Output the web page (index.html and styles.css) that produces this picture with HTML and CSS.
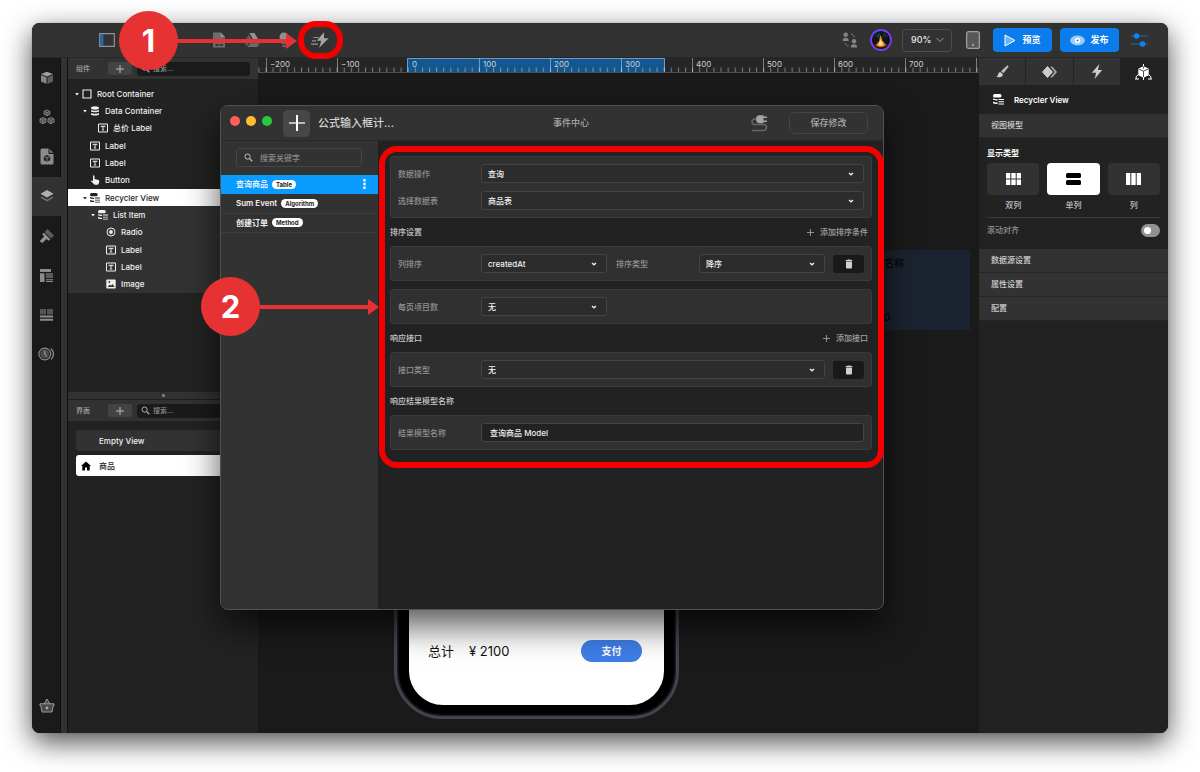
FILE: index.html
```html
<!DOCTYPE html>
<html lang="zh-CN">
<head>
<meta charset="utf-8">
<title>事件中心</title>
<link rel="stylesheet" href="styles.css">
</head>
<body>
<svg class="defs" aria-hidden="true">
  <symbol id="i-label" viewBox="0 0 10 10"><path d="M.5 1h9v8h-9z" fill="none" stroke="currentColor"/><path d="M2.700 2.800h4.600v1.500H6.600V3.700H5.500v3h.7v.8H3.800v-.8h.7v-3H3.400v.6H2.700z" fill="currentColor"/></symbol>
  <symbol id="i-data" viewBox="0 0 10 10"><g fill="currentColor"><ellipse cx="5" cy="2" rx="4" ry="1.700"/><path d="M1 4c1.600 1.100 6.400 1.100 8 0v1.500C7.800 6.600 2.200 6.600 1 5.500zM1 7c1.600 1.100 6.400 1.100 8 0v1.500C7.800 9.800 2.200 9.800 1 8.500z"/></g></symbol>
  <symbol id="i-recycler" viewBox="0 0 11 11"><g fill="currentColor"><rect x="0" y="0" width="8.500" height="3.600" rx="1.700"/><path d="M0 4.200c1 .9 2.500 1 4.500 1v1.500C2.500 6.700.6 6.500 0 5.600zM0 7.500c1 .9 2.500 1 4.500 1V10C2.500 10 .6 9.800 0 9z"/><path d="M5.500 5h5.500v1H5.500zM5.500 7.300h5.500v1H5.500zM5.500 9.500h5.500v1H5.500z"/></g></symbol>
  <symbol id="i-search" viewBox="0 0 10 10"><circle cx="4" cy="4" r="2.900" fill="none" stroke="currentColor" stroke-width="1.100"/><path d="M6.200 6.200 9.200 9.200" stroke="currentColor" stroke-width="1.300"/></symbol>
  <symbol id="i-plus" viewBox="0 0 8 8"><path d="M4 0v8M0 4h8" stroke="currentColor" fill="none"/></symbol>
  <symbol id="i-caret" viewBox="0 0 6 6"><path d="M1.200 2h3.600L3 4.400z" fill="currentColor"/></symbol>
  <symbol id="i-chev" viewBox="0 0 6 6"><path d="M1 2 3 3.800 5 2" fill="none" stroke="currentColor" stroke-width="1.300"/></symbol>
  <symbol id="i-trash" viewBox="0 0 8 10"><path d="M2.500.5h3V1H7.300v1.200H.7V1h1.800zM1 2.800h6V8.500Q7 9.500 6 9.500H2Q1 9.500 1 8.500z" fill="currentColor"/></symbol>
  <symbol id="i-bolt" viewBox="0 0 12 16"><path d="M8.500 0 .5 9.200H5L3.500 16 11.500 6.300H7z" fill="currentColor"/></symbol>
</svg>

<main class="window">
  <header class="topbar">
    <button class="icon-btn toggle-panel" aria-label="面板"><svg width="16" height="14" viewBox="0 0 16 14"><path d="M.7.700h14.600v12.600H.7z" fill="none" stroke="#929292" stroke-width="1.200"/><path d="M1.300 1.300h3.200v11.400H1.300z" fill="#2469ae"/></svg></button>
    <nav class="tools" aria-label="工具">
      <button class="icon-btn" aria-label="文件"><svg width="16" height="16" viewBox="0 0 16 16"><path d="M2 .5h7.500L14 5v10.500H2z" fill="#6c6c6c"/><path d="M9.500.5 14 5H9.500z" fill="#929292"/><path d="M4.500 8h3v2.500h-3zM8.700 8h3v2.500h-3zM4.500 12h3v2h-3zM8.700 12h3v2h-3z" fill="#323232"/></svg></button>
      <button class="icon-btn" aria-label="云盘"><svg width="16" height="14" viewBox="0 0 16 14"><path d="M5.500 0h5L16 9.500h-5.200z" fill="#929292"/><path d="M4.800 1.200 7.500 5.700 2.800 13.500.2 9z" fill="#5c5c5c"/><path d="M6 10.200h9.700L13.200 14H3.500z" fill="#6c6c6c"/></svg></button>
      <button class="icon-btn" aria-label="提示"><svg width="16" height="16" viewBox="0 0 16 16"><circle cx="7" cy="5" r="4.500" fill="#8f8f8f"/><path d="M4.500 10h5v2h-5zM5.500 13h3v2h-3z" fill="#6c6c6c"/></svg></button>
      <button class="icon-btn" aria-label="事件中心"><svg width="20" height="16" viewBox="0 0 20 16"><path d="M14 .3 6.800 8.700h4.500L9.200 15.700 18.700 6.300H14z" fill="#a5a5a5"/><path d="M3.500 5.500h5M2 8.800h4M1 12.200h7" stroke="#929292" stroke-width="1.200"/></svg></button>
    </nav>
    <div class="actions">
      <button class="icon-btn" aria-label="协作"><svg width="16" height="16" viewBox="0 0 16 16" fill="#858585"><circle cx="3.700" cy="2.800" r="2.200"/><path d="M.8 9V7.500Q1 5.800 3.700 5.800T6.600 7.500V9z"/><circle cx="12" cy="9.300" r="2.200"/><path d="M9 15.500V14q.2-1.700 3-1.700t3 1.700v1.500z"/><path d="M9 2q3 .3 3.200 3.300M3.500 11q.3 2.800 3 3" fill="none" stroke="#858585" stroke-dasharray="2 1"/></svg></button>
      <svg class="avatar" width="22" height="22" viewBox="0 0 22 22" role="img" aria-label="头像"><circle cx="11" cy="11" r="10" fill="#0c161c" stroke="#7a3df0" stroke-width="1.800"/><path d="M5 8l1.500-3L8 9l1-5 1.500 5M13 8l1.500-4L16 8l1-2" stroke="#1f3c44" fill="none"/><path d="M4 16q7-4 14 0-7 5-14 0z" fill="#7a3010"/><path d="M6.500 16.500q0-2.500 2.500-4 .5-3 1.500-6.500 1.500 3.500 2 6 3 2 2.500 4.500-4 2.500-8.500 0z" fill="#f08a1c"/><path d="M8.500 16.500q.5-3 2-6 2.500 3 2.200 6z" fill="#ffe27a"/></svg>
      <span class="zoom"><select aria-label="缩放"><option>90%</option></select><svg width="8" height="6" viewBox="0 0 8 6"><path d="M.6 1 4 4.500 7.400 1" fill="none" stroke="#9a9a9a"/></svg></span>
      <button class="icon-btn device" aria-label="设备"><svg width="14" height="18" viewBox="0 0 14 18"><rect x=".6" y=".6" width="12.800" height="16.800" rx="2" fill="#585858" stroke="#a0a0a0" stroke-width="1.200"/><circle cx="7" cy="14" r="1" fill="#b5b5b5"/></svg></button>
      <button class="primary"><svg width="12" height="13" viewBox="0 0 12 13"><path d="M1 1 11 6.500 1 12z" fill="#6cb2f7" stroke="#fff" stroke-linejoin="round"/></svg>预览</button>
      <button class="primary publish"><svg width="15" height="11" viewBox="0 0 15 11"><ellipse cx="7.500" cy="5.500" rx="7.300" ry="5" fill="#9ecbfa"/><circle cx="7.500" cy="5.500" r="2.700" fill="#fff"/><circle cx="7.500" cy="5.500" r="1" fill="#0a7ceb"/></svg>发布</button>
      <button class="icon-btn settings" aria-label="设置"><svg width="18" height="14" viewBox="0 0 18 14"><path d="M0 3h17M0 11h17" stroke="#1c68b4"/><circle cx="5.500" cy="3" r="2.800" fill="#0a84ff"/><circle cx="11.500" cy="11" r="2.800" fill="#0a84ff"/></svg></button>
    </div>
  </header>

  <div class="workspace">
    <nav class="rail" aria-label="侧栏">
      <div class="rail-list">
        <button aria-label="组件"><svg width="14" height="14" viewBox="0 0 14 14"><path d="M7 .8 13 3 7 5.400 1 3z" fill="#a0a0a0"/><path d="M1 4l5.500 2.200V13L1 10.600z" fill="#858585"/><path d="M13 4 7.500 6.200V13l5.500-2.400z" fill="#5e5e5e"/></svg></button>
        <button aria-label="模块"><svg width="16" height="16" viewBox="0 0 16 16" fill="#4c4c4c" stroke="#8a8a8a" stroke-width=".8"><path d="M8 1l3 1.300v3L8 6.700 5 5.300v-3zM5 2.300l3 1.300 3-1.300M8 3.600v3M4 8.500l3 1.300v3.500L4 14.700 1 13.300V9.800zM1 9.800 4 11l3-1.200M4 11v3.700M12 8.500l3 1.300v3.500l-3 1.400-3-1.400V9.800zM9 9.800l3 1.200 3-1.200M12 11v3.700"/></svg></button>
        <button aria-label="文件"><svg width="14" height="17" viewBox="0 0 14 17"><path d="M2 .5h6.500V5q0 1 1 1H13.500v9q0 1.500-1.500 1.500H2Q.5 16.500.5 15V2Q.5.500 2 .500z" fill="#8b8b8b"/><path d="M9.500.8 13.300 4.800H9.500z" fill="#777"/><path d="M7 7l3.200 1.300v4L7 13.800l-3.200-1.500v-4z" fill="#222"/><path d="M3.800 8.300 7 9.700l3.200-1.400M7 9.700v4" stroke="#8b8b8b" fill="none" stroke-width=".8"/></svg></button>
        <button class="active" aria-label="图层"><svg width="14" height="14" viewBox="0 0 14 14"><path d="M7 1l6.500 3.800L7 8.600.5 4.800z" fill="#b0b0b0"/><path d="M2 7.800l5 2.900 5-2.900 1.500.9L7 12.500.5 8.700z" fill="#707070"/></svg></button>
        <button aria-label="样式"><svg width="14" height="14" viewBox="0 0 14 14"><path d="M7.500 0 14 6.500 11 9.500 4.500 3z" fill="#5b5b5b"/><path d="M3.800 3.700l6.500 6.500-1.500 1.500-2.300-1.600L2.700 13.700Q1.500 14 .5 13T.5 11.200L4.200 7.500 2.300 5.200z" fill="#929292"/></svg></button>
        <button aria-label="布局"><svg width="13" height="13" viewBox="0 0 13 13"><path d="M0 0h11v3H0zM0 4.200h4.500V13H0zM6 10.300h7v1H6zM6 12h7v1H6z" fill="#8b8b8b"/><path d="M6 4h7v5H6z" fill="#5b5b5b"/></svg></button>
        <button aria-label="网格"><svg width="13" height="12" viewBox="0 0 13 12"><path d="M0 0h6v5.500H0zM7 0h6v5.500H7z" fill="#555"/><path d="M0 6.500h13v2H0zM0 9.800h13v2H0z" fill="#8b8b8b"/></svg></button>
        <button aria-label="历史"><svg width="17" height="14" viewBox="0 0 17 14" fill="none" stroke="#8b8b8b"><circle cx="6.800" cy="7" r="5.900" stroke-width="1.200"/><circle cx="6.800" cy="7" r="4.600" fill="#4a4a4a" stroke="none"/><path d="M6.800 3.500V7.300L8.500 9.500" stroke="#aaa"/><path d="M13 1.500q5 5.500 0 11" stroke-width="1.300"/></svg></button>
      </div>
      <button class="rail-end" aria-label="商店"><svg width="16" height="15" viewBox="0 0 16 15"><path d="M5 6 8 1l3 5M1 5.800h14v2h-.8L13 14H3L1.800 7.800H1z" fill="#4a4a4a" stroke="#999"/><circle cx="8" cy="10" r="1.400" fill="#aaa"/></svg></button>
    </nav>

    <aside class="side">
      <section class="components">
        <div class="side-head">
          <h2>组件</h2>
          <button class="add" aria-label="添加组件"><svg width="8" height="8"><use href="#i-plus"/></svg></button>
          <label class="search"><svg width="9" height="9"><use href="#i-search"/></svg><input type="search" placeholder="搜索..." aria-label="搜索组件"></label>
        </div>
        <ul class="tree">
          <li class="d0"><svg class="caret"><use href="#i-caret"/></svg><svg class="ico" viewBox="0 0 10 10"><path d="M1 1h8v8H1z" fill="none" stroke="currentColor" stroke-width="1.100"/></svg>Root Container</li>
          <li class="d1"><svg class="caret"><use href="#i-caret"/></svg><svg class="ico"><use href="#i-data"/></svg>Data Container</li>
          <li class="d2"><span class="caret"></span><svg class="ico"><use href="#i-label"/></svg>总价 Label</li>
          <li class="d1"><span class="caret"></span><svg class="ico"><use href="#i-label"/></svg>Label</li>
          <li class="d1"><span class="caret"></span><svg class="ico"><use href="#i-label"/></svg>Label</li>
          <li class="d1"><span class="caret"></span><svg class="ico" viewBox="0 0 10 10"><path d="M3 1q0-.8.7-.8t.8.800v3l4 .9q1 .3.8 1.300L8.800 8.500 7.800 9.800H4.500L.8 5.900q.8-1 2.200.4z" fill="currentColor"/></svg>Button</li>
          <li class="d1 selected"><svg class="caret"><use href="#i-caret"/></svg><svg class="ico"><use href="#i-recycler"/></svg>Recycler View</li>
          <li class="d2 child"><svg class="caret"><use href="#i-caret"/></svg><svg class="ico"><use href="#i-recycler"/></svg>List Item</li>
          <li class="d3 child"><span class="caret"></span><svg class="ico" viewBox="0 0 10 10"><circle cx="5" cy="5" r="4" fill="none" stroke="currentColor"/><circle cx="5" cy="5" r="1.900" fill="currentColor"/></svg>Radio</li>
          <li class="d3 child"><span class="caret"></span><svg class="ico"><use href="#i-label"/></svg>Label</li>
          <li class="d3 child"><span class="caret"></span><svg class="ico"><use href="#i-label"/></svg>Label</li>
          <li class="d3 child"><span class="caret"></span><svg class="ico" viewBox="0 0 10 10"><rect x=".3" y=".5" width="9.400" height="9" rx="1" fill="currentColor"/><path d="M1.500 8 4 5.500l1.200 1.200L6.500 5 8.600 8z" fill="#323232"/><circle cx="3.300" cy="3" r=".9" fill="#323232"/></svg>Image</li>
        </ul>
      </section>
      <div class="splitter"></div>
      <section>
        <div class="side-head">
          <h2>界面</h2>
          <button class="add" aria-label="添加界面"><svg width="8" height="8"><use href="#i-plus"/></svg></button>
          <label class="search"><svg width="9" height="9"><use href="#i-search"/></svg><input type="search" placeholder="搜索..." aria-label="搜索界面"></label>
        </div>
        <ul class="views">
          <li><span class="ico"></span>Empty View</li>
          <li class="current"><svg class="ico" viewBox="0 0 10 10"><path d="M5 .5 10 5H8.700v4.500H6V6.500H4v3H1.300V5H0z" fill="#000"/></svg>商品</li>
        </ul>
      </section>
    </aside>

    <section class="canvas" aria-label="画布">
      <svg class="ruler" height="15">
        <defs><pattern id="ticks" x="7.500" y="0" width="7.110" height="15" patternUnits="userSpaceOnUse"><path d="M.5 9.500V14" stroke="#fff" stroke-opacity=".4"/></pattern></defs>
        <rect x="149" y="0" width="258" height="14" fill="#14568f"/>
        <path d="M149.500 15V.5H406.500V14" fill="none" stroke="#6d9bc6"/>
        <rect width="100%" height="14" fill="url(#ticks)"/>
        <path d="M8.500 0v14M79.500 0v14M221.500 0v14M292.500 0v14M363.500 0v14M434.500 0v14M505.500 0v14M576.500 0v14M647.500 0v14M718.500 0v14" stroke="#fff" stroke-opacity=".4"/>
        <path d="M0 14.500H4000" stroke="#505050"/>
        <g class="ruler-text"><text x="12" y="9">−200</text><text x="83" y="9">−100</text><text x="154" y="9">0</text><text x="225" y="9">100</text><text x="296" y="9">200</text><text x="367" y="9">300</text><text x="438" y="9">400</text><text x="509" y="9">500</text><text x="580" y="9">600</text><text x="651" y="9">700</text></g>
      </svg>
      <div class="cell"><span>名称</span><span>0</span></div>
      <div class="phone">
        <div class="screen">
          <span>总计</span><span class="price">¥ 2100</span><button class="pay">支付</button>
        </div>
      </div>
    </section>

    <aside class="inspector">
      <nav class="tabs" aria-label="检查器">
        <button aria-label="样式"><svg width="13" height="13" viewBox="0 0 13 13"><path d="M11.300.300 12.700 1.600 7.500 8.300 5 6.300z" fill="#bbb"/><path d="M4.300 7l2.600 2.200Q6.500 12 3.500 12.300L.3 12Q2 11.300 2 9.500 2.500 7.300 4.300 7z" fill="#d0d0d0"/></svg></button>
        <button aria-label="状态"><svg width="15" height="12" viewBox="0 0 15 12"><path d="M5.500.500 10.500 6 5.500 11.500.5 6z" fill="#ccc" stroke="#ccc" stroke-linejoin="round"/><path d="M8.300.500h1.800L15 6l-4.900 5.500H8.300L12.600 6z" fill="#aaa"/></svg></button>
        <button class="bolt" aria-label="事件"><svg width="12" height="15"><use href="#i-bolt"/></svg></button>
        <button class="active" aria-label="数据"><svg width="17" height="16" viewBox="0 0 17 16"><path d="M8 0h1v2.600l4.700 2v6.600L8.500 13.700 3.300 11.200V4.600L8 2.600z" fill="#fff"/><path d="M3.500 4.900l5 2.200 5-2.200M8.500 7.100v6.500M8.500 2.500v2.200" stroke="#222" fill="none" stroke-width=".8"/><path d="M3.500 10.500 1.200 12.500V15M13.500 10.500l2.300 2V15M0 15h4M13 15H17M8.500 13v3" stroke="#fff" fill="none"/></svg></button>
      </nav>
      <h1 class="obj"><svg width="11" height="11"><use href="#i-recycler"/></svg>Recycler View</h1>
      <h2 class="bar">视图模型</h2>
      <div class="model">
        <h3>显示类型</h3>
        <div class="cards">
          <div><button aria-label="双列"><svg width="15" height="12" viewBox="0 0 15 12" fill="#fff"><path d="M0 0h4.300v5.400H0zM5.300 0h4.400v5.400H5.300zM10.700 0H15v5.400h-4.300zM0 6.500h4.300V12H0zM5.300 6.500h4.400V12H5.300zM10.700 6.500H15V12h-4.300z"/></svg></button><span>双列</span></div>
          <div><button class="on" aria-label="单列"><svg width="15" height="12" viewBox="0 0 15 12"><rect width="15" height="5" rx="1.500"/><rect y="7" width="15" height="5" rx="1.500"/></svg></button><span>单列</span></div>
          <div><button aria-label="列"><svg width="15" height="12" viewBox="0 0 15 12" fill="#fff"><path d="M0 0h4.300v12H0zM5.300 0h4.400v12H5.300zM10.700 0H15v12h-4.300z"/></svg></button><span>列</span></div>
        </div>
        <label class="snap">滚动对齐<input type="checkbox" role="switch"></label>
      </div>
      <h2 class="bar">数据源设置</h2>
      <h2 class="bar">属性设置</h2>
      <h2 class="bar">配置</h2>
    </aside>
  </div>

  <section class="dialog" role="dialog" aria-label="事件中心">
    <header class="dialog-head">
      <span class="lights"><i></i><i></i><i></i></span>
      <button class="new" aria-label="新建"><svg width="16" height="16" viewBox="0 0 16 16"><path d="M0 8h16" stroke="#bbb" stroke-width="2"/><path d="M8 0v16" stroke="#fff" stroke-width="2"/></svg></button>
      <span class="doc">公式输入框计...</span>
      <h2>事件中心</h2>
      <div class="dialog-tools">
        <svg width="17" height="17" viewBox="0 0 17 17"><path d="M5.500 4H4Q1 4 1 6.800T4 9.500H13Q15.500 9.500 15.500 12.200T13 15.500H1" fill="none" stroke="#666" stroke-width="1.600"/><path d="M8 .3h4.500v1.200H16V3h-3.500v2.500H16V7h-3.500v1.200H8Q5 7.800 5 4.300T8 .3z" fill="#a5a5a5"/></svg>
        <button class="save">保存修改</button>
      </div>
    </header>
    <div class="dialog-body">
      <nav class="events">
        <label class="find"><svg width="9" height="9"><use href="#i-search"/></svg><input type="search" placeholder="搜索关键字" aria-label="搜索关键字"></label>
        <ul>
          <li class="on">查询商品<b>Table</b><button aria-label="更多"><svg width="3" height="10" viewBox="0 0 3 10" fill="#fff"><path d="M.3 0h2.400v2.400H.3zM.3 3.800h2.400v2.400H.3zM.3 7.600h2.400V10H.3z"/></svg></button></li>
          <li>Sum Event<b>Algorithm</b></li>
          <li>创建订单<b>Method</b></li>
        </ul>
      </nav>
      <form class="form">
        <div class="group">
          <div class="row"><label for="op">数据操作</label><span class="pick wide"><select id="op"><option>查询</option></select><svg><use href="#i-chev"/></svg></span></div>
          <div class="row"><label for="tb">选择数据表</label><span class="pick wide"><select id="tb"><option>商品表</option></select><svg><use href="#i-chev"/></svg></span></div>
        </div>
        <div class="caption"><h3>排序设置</h3><button type="button"><svg width="7" height="7"><use href="#i-plus"/></svg>添加排序条件</button></div>
        <div class="group">
          <div class="row"><label for="col">列排序</label><span class="pick"><select id="col"><option>createdAt</option></select><svg><use href="#i-chev"/></svg></span><label class="second" for="ord">排序类型</label><span class="pick"><select id="ord"><option>降序</option></select><svg><use href="#i-chev"/></svg></span><button type="button" class="del" aria-label="删除排序"><svg width="8" height="10"><use href="#i-trash"/></svg></button></div>
        </div>
        <div class="group next">
          <div class="row"><label for="pg">每页项目数</label><span class="pick"><select id="pg"><option>无</option></select><svg><use href="#i-chev"/></svg></span></div>
        </div>
        <div class="caption"><h3>响应接口</h3><button type="button"><svg width="7" height="7"><use href="#i-plus"/></svg>添加接口</button></div>
        <div class="group">
          <div class="row"><label for="api">接口类型</label><span class="pick wide"><select id="api"><option>无</option></select><svg><use href="#i-chev"/></svg></span><button type="button" class="del" aria-label="删除接口"><svg width="8" height="10"><use href="#i-trash"/></svg></button></div>
        </div>
        <div class="caption"><h3>响应结果模型名称</h3></div>
        <div class="group">
          <div class="row"><label for="nm">结果模型名称</label><input id="nm" type="text" value="查询商品 Model"></div>
        </div>
      </form>
    </div>
  </section>

  <div class="ring ring-tool"></div>
  <div class="ring ring-form"></div>
  <div class="step step-one"><span>1</span><svg width="119" height="16" viewBox="0 0 119 16"><path d="M0 6h108V0l11 8-11 8v-6H0z" fill="#e63232"/></svg></div>
  <div class="step step-two"><span>2</span><svg width="119" height="16" viewBox="0 0 119 16"><path d="M0 6h108V0l11 8-11 8v-6H0z" fill="#e63232"/></svg></div>
</main>
</body>
</html>
```

FILE: styles.css
```css
* { box-sizing: border-box; }
body {
  margin: 0;
  padding: 23px 32px 39px;
  background: #fff;
  color: #e6e6e6;
  font: 500 8px/12px Inter, "Noto Sans CJK SC", sans-serif;
}
h1, h2, h3, ul { margin: 0; padding: 0; font-size: inherit; font-weight: inherit; list-style: none; }
button, input, select { margin: 0; padding: 0; border: 0; background: none; color: inherit; font: inherit; }
svg { display: block; flex: none; }
input::placeholder { color: #8a8a8a; opacity: 1; }
input[type="search"] { appearance: none; outline: 0; width: 100%; min-width: 0; }
.defs { position: absolute; width: 0; height: 0; }

.window {
  position: relative;
  display: flex;
  flex-direction: column;
  min-height: calc(100vh - 62px);
  border-radius: 8px;
  background: #222;
  box-shadow: 0 0 1px #555, 0 9px 28px rgba(0, 0, 0, .7);
}

/* Top bar */
.topbar { display: flex; align-items: center; height: 35px; padding: 0 19px 0 67px; background: #323232; border-radius: 8px 8px 0 0; border-bottom: 1px solid #262626; }
.icon-btn { display: grid; place-items: center; }
.tools { display: flex; align-items: center; gap: 17px; margin-left: 96px; }
.actions { display: flex; align-items: center; gap: 12px; margin-left: auto; }
.zoom { display: grid; align-items: center; width: 50px; height: 23px; border: 1px solid #4d4d4d; border-radius: 4px; margin-left: -2px; }
.zoom > * { grid-area: 1 / 1; }
.zoom select { appearance: none; height: 21px; padding-left: 8px; font-size: 9px; }
.zoom svg { justify-self: end; margin-right: 7px; pointer-events: none; }
.device { margin: 0 1px 0 2px; }
.primary { display: flex; align-items: center; justify-content: center; gap: 6px; width: 59px; height: 24px; border-radius: 4px; background: #0a7ceb; color: #fff; font-size: 9px; font-weight: 700; }
.publish { margin-left: -4px; gap: 5px; }

/* Workspace */
.workspace { flex: 1; display: flex; border-radius: 0 0 8px 8px; overflow: hidden; }
.rail { display: flex; flex-direction: column; justify-content: space-between; width: 35px; border-right: 6px solid #323232; background: #1a1a1a; box-shadow: inset -1px 0 #111; }
.rail-list { display: grid; grid-auto-rows: 1fr; height: 316px; }
.rail button { display: grid; place-items: center; }
.rail .active { background: #323232; }
.rail .rail-end { height: 56px; }

.side { width: 191px; background: #222; border-left: 1px solid #111; }
.components { height: 334px; }
.side-head { display: flex; align-items: center; height: 21px; padding: 0 8px 0 8px; background: #323232; color: #a0a0a0; }
.side-head h2 { width: 32px; font-size: 7px; }
.add { display: grid; place-items: center; width: 24px; height: 13px; border-radius: 3px; background: #434343; color: #bbb; }
.search { flex: 1; display: flex; align-items: center; gap: 3px; height: 14px; margin-left: 5px; padding: 0 4px; border-radius: 3px; background: #1a1a1a; color: #b0b0b0; }
.search input { font-size: 7px; }
.tree { display: grid; grid-auto-rows: 1fr; height: 208px; margin-top: 6px; color: #f0f0f0; }
.tree li { display: flex; align-items: center; }
.tree .caret { width: 6px; height: 6px; margin-right: 2px; }
.tree .ico { width: 10px; height: 10px; margin-right: 5px; }
.d0 { padding-left: 6px; }
.d1 { padding-left: 14px; }
.d2 { padding-left: 22px; }
.d3 { padding-left: 30px; }
.tree .selected { background: #fff; color: #222; }
.child { background: #323232; }
.splitter { display: grid; place-items: center; height: 8px; background: #323232; border-bottom: 1px solid #1e1e1e; }
.splitter::after { content: ""; width: 3px; height: 3px; border-radius: 50%; background: #888; }
.views { display: grid; gap: 4px; padding: 9px 8px; }
.views li { display: flex; align-items: center; gap: 8px; height: 21px; padding-left: 5px; border-radius: 3px; background: #323232; color: #f0f0f0; }
.views .ico { width: 10px; height: 10px; }
.views .current { background: #fff; color: #222; }

/* Canvas */
.canvas { position: relative; flex: 1; min-width: 0; overflow: hidden; background: #1a1a1a; }
.ruler { width: 100%; background: #262626; }
.ruler-text { fill: #d0d0d0; font-size: 8px; font-weight: 400; }
.cell { position: absolute; top: 192px; right: 9px; display: flex; flex-direction: column; justify-content: space-between; width: 88px; height: 80px; padding: 7px 2px; background: #1b2330; color: #050608; font-size: 10px; }
.phone { position: absolute; left: 136px; top: 120px; width: 285px; height: 541px; padding: 11px 12px; border: 3px solid #45424f; border-radius: 48px; background: #000; box-shadow: inset 0 0 2px 1px #2a2835; }
.screen { display: flex; align-items: center; height: 100%; padding: 404px 22px 0 19px; border-radius: 34px; background: #fff; color: #111; font-size: 13px; font-weight: 400; }
.price { margin-left: 15px; }
.pay { width: 61px; height: 22px; margin-left: auto; border-radius: 11px; background: #3f7ee8; color: #fff; font-size: 10px; font-weight: 700; }

/* Inspector */
.inspector { width: 189px; background: #222; }
.tabs { display: grid; grid-template-columns: repeat(4, 1fr); height: 27px; }
.tabs button { display: grid; place-items: center; background: #323232; border-right: 1px solid #222; }
.tabs .active { background: #222; }
.tabs .bolt { color: #ccc; }
.obj { display: flex; align-items: center; gap: 10px; height: 29px; padding-left: 14px; color: #fff; font-weight: 600; }
.bar { height: 24px; padding-left: 12px; border-bottom: 1px solid #262626; background: #323232; color: #d0d0d0; line-height: 23px; }
.model { height: 111px; padding: 9px 8px 0; }
.model h3 { color: #fff; font-weight: 700; line-height: 13px; }
.cards { display: grid; grid-template-columns: repeat(3, 1fr); gap: 8px; margin-top: 3px; padding-bottom: 6px; border-bottom: 1px solid #3a3a3a; text-align: center; color: #c0c0c0; }
.cards button { display: grid; place-items: center; width: 100%; height: 32px; margin-bottom: 4px; border-radius: 4px; background: #323232; }
.cards .on { background: #fff; }
.snap { display: flex; align-items: center; justify-content: space-between; height: 24px; color: #909090; }
.snap input { appearance: none; display: flex; align-items: center; width: 19px; height: 13px; padding: 0 3px; border-radius: 7px; background: #929292; }
.snap input::before { content: ""; width: 7px; height: 7px; border-radius: 50%; background: #fff; }

/* Dialog */
.dialog { position: absolute; left: 188px; top: 82px; display: flex; flex-direction: column; width: 664px; min-height: 505px; border: 1px solid #525252; border-radius: 8px; background: #222; box-shadow: 0 16px 34px rgba(0, 0, 0, .65); overflow: hidden; }
.dialog-head { display: flex; align-items: center; height: 35px; padding: 0 15px 0 9px; background: #323232; border-bottom: 1px solid #282828; color: #a8a8a8; font-size: 9px; }
.lights { display: flex; gap: 6px; margin-bottom: 5px; }
.lights i { width: 10px; height: 10px; border-radius: 50%; background: #ff5f57; }
.lights i:nth-child(2) { background: #febc2e; }
.lights i:nth-child(3) { background: #28c840; }
.new { display: grid; place-items: center; width: 27px; height: 27px; margin-left: 11px; border-radius: 5px; background: #474747; }
.doc { width: 226px; margin-left: 8px; color: #d4d4d4; font-size: 11px; }
.dialog-head h2 { margin-left: 9px; }
.dialog-tools { display: flex; align-items: center; gap: 21px; margin-left: auto; }
.save { width: 79px; height: 22px; border: 1px solid #444; border-radius: 6px; }
.dialog-body { flex: 1; display: flex; }
.events { width: 158px; background: #323232; border-right: 1px solid #1e1e1e; }
.find { display: flex; align-items: center; gap: 7px; height: 19px; margin: 7px 16px 8px 15px; padding: 0 7px; border: 1px solid #464646; border-radius: 3px; color: #c0c0c0; }
.events li { display: flex; align-items: center; padding: 0 12px 0 15px; border-bottom: 1px solid #3d3d3d; color: #f0f0f0; font-weight: 600; }
.events ul { display: grid; grid-auto-rows: 1fr; height: 58px; }
.events .on { background: #0a9bff; border-color: #0a9bff; color: #fff; font-weight: 500; }
.events b { margin-left: 4px; padding: 0 4px; border-radius: 5px; background: #fff; color: #222; font-size: 6px; font-weight: 700; line-height: 9px; }
.events button { margin-left: auto; }
.form { flex: 1; padding: 15px 11px; }
.group { display: grid; gap: 8px; padding: 7px; border: 1px solid #3b3b3b; border-radius: 3px; background: #303030; }
.next { margin-top: 8px; }
.row { display: flex; align-items: center; height: 19px; color: #909090; }
.row label { width: 83px; }
.row .second { margin-left: 9px; }
.pick { display: grid; align-items: center; width: 126px; height: 19px; border: 1px solid #444; border-radius: 3px; background: #2c2c2c; color: #f0f0f0; }
.pick > * { grid-area: 1 / 1; }
.wide { flex: 1; }
.pick select { appearance: none; height: 17px; padding-left: 6px; }
.pick svg { justify-self: end; width: 6px; height: 6px; margin-right: 9px; pointer-events: none; }
.row input { flex: 1; height: 19px; padding-left: 8px; border: 1px solid #444; border-radius: 3px; background: #222; color: #f0f0f0; }
.del { display: grid; place-items: center; width: 31px; height: 18px; margin-left: 8px; border-radius: 3px; background: #191919; color: #d0d0d0; }
.caption { display: flex; align-items: center; justify-content: space-between; height: 28px; padding-right: 4px; color: #c8c8c8; }
.caption button { display: flex; align-items: center; gap: 6px; color: #a0a0a0; }

/* Guide marks */
.ring { position: absolute; border: 6px solid #f40000; border-radius: 18px; pointer-events: none; }
.ring-tool { left: 266px; top: -2px; width: 45px; height: 38px; }
.ring-form { left: 347px; top: 123px; width: 505px; height: 322px; }
.step { position: absolute; display: flex; align-items: center; pointer-events: none; }
.step span { width: 59px; height: 59px; border-radius: 50%; background: #e63232; color: #fff; font-size: 31px; font-weight: 700; line-height: 59px; text-align: center; }
.step-one { left: 87px; top: -12px; }
.step-two { left: 169px; top: 254px; }
```
